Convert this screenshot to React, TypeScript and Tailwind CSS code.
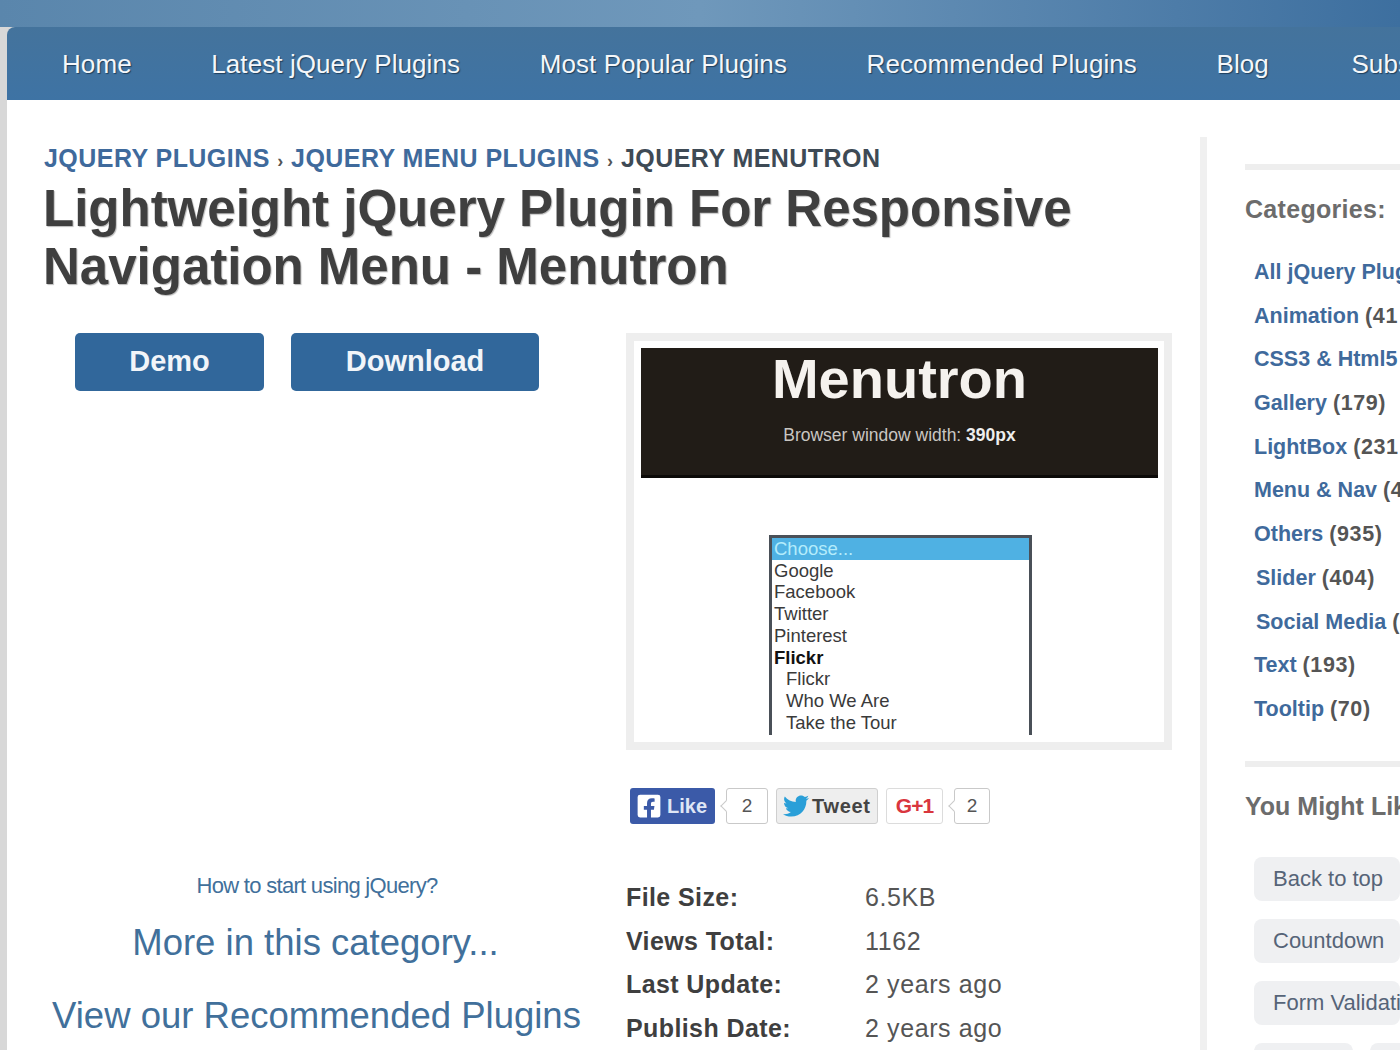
import React from 'react';
import { FaFacebookSquare, FaTwitter } from 'react-icons/fa';

const navLinks = ['Home', 'Latest jQuery Plugins', 'Most Popular Plugins', 'Recommended Plugins', 'Blog', 'Subscribe'];

const categories = [
  { name: 'All jQuery Plugins', count: '', indent: '' },
  { name: 'Animation', count: '(41', indent: '' },
  { name: 'CSS3 & Html5', count: '', indent: '' },
  { name: 'Gallery', count: '(179)', indent: '' },
  { name: 'LightBox', count: '(231', indent: '' },
  { name: 'Menu & Nav', count: '(4', indent: '' },
  { name: 'Others', count: '(935)', indent: '' },
  { name: 'Slider', count: '(404)', indent: 'ml-[2px]' },
  { name: 'Social Media', count: '(', indent: 'ml-[2px]' },
  { name: 'Text', count: '(193)', indent: '' },
  { name: 'Tooltip', count: '(70)', indent: '' },
];

const stats = [
  ['File Size:', '6.5KB'],
  ['Views Total:', '1162'],
  ['Last Update:', '2 years ago'],
  ['Publish Date:', '2 years ago'],
];

const options = ['Google', 'Facebook', 'Twitter', 'Pinterest'];
const subOptions = ['Flickr', 'Who We Are', 'Take the Tour'];

function CountBubble({ value, narrow }: { value: string; narrow?: boolean }) {
  return (
    <div className={`relative ml-[11px] flex h-[36px] items-center justify-center rounded-[3px] border border-[#c9c9c9] bg-white text-[19px] text-[#555] ${narrow ? 'w-[36px]' : 'w-[42px]'}`}>
      <span className="absolute left-[-5px] top-[13px] h-[8px] w-[8px] rotate-45 border-b border-l border-[#c9c9c9] bg-white"></span>
      {value}
    </div>
  );
}

function PreviewShot() {
  return (
    <div className="h-[417px] w-[546px] border-8 border-[#eeeeee] bg-white pl-[7px] pr-[6px] pt-[7px]">
      <div className="flex h-[130px] flex-col items-center border-b-[3px] border-[#0c0a08] bg-[#211c17] text-[#f5f2ee]">
        <div className="mt-[-1px] text-[56px] font-bold leading-[64px]">Menutron</div>
        <div className="mt-[14px] text-[17.5px] leading-[20px] text-[#c9c6c2]">
          Browser window width: <span className="font-bold text-[#eeeeee]">390px</span>
        </div>
      </div>
      <div className="ml-[128px] mt-[57px] h-[200px] w-[263px] overflow-hidden border-x-[3px] border-t-[3px] border-[#4a5058] text-[18.5px] leading-[21.7px] text-[#3a3a3a]">
        <div className="bg-[#4fb1e3] pl-[2px] text-[#b4ecfb]">Choose...</div>
        {options.map((o) => (
          <div key={o} className="pl-[2px]">{o}</div>
        ))}
        <div className="pl-[2px] font-bold text-[#111]">Flickr</div>
        {subOptions.map((o) => (
          <div key={o} className="pl-[14px]">{o}</div>
        ))}
      </div>
    </div>
  );
}

function SocialRow() {
  return (
    <div className="mt-[38px] ml-[4px] flex h-[36px] items-center">
      <div className="flex h-[36px] w-[85px] items-center gap-[5px] rounded-[3px] bg-[#3b5aa8] pl-[6px] text-[20px] font-bold text-[#dfe6f5]">
        <FaFacebookSquare className="h-[26px] w-[26px] text-white" />
        <span>Like</span>
      </div>
      <CountBubble value="2" />
      <div className="ml-[8px] flex h-[36px] w-[102px] items-center gap-[3px] rounded-[3px] border border-[#cfcfcf] bg-[#eeeeee] pl-[6px] text-[20px] font-bold tracking-[0.7px] text-[#444]">
        <FaTwitter className="h-[26px] w-[26px] text-[#2a9fd8]" />
        <span>Tweet</span>
      </div>
      <div className="ml-[8px] flex h-[36px] w-[57px] items-center justify-center rounded-[3px] border border-[#dcdcdc] bg-white text-[21px] font-bold tracking-[-1px] text-[#d9363e]">
        G+1
      </div>
      <CountBubble value="2" narrow />
    </div>
  );
}

export default function App() {
  return (
    <div className="flex h-[1050px] w-[1400px] flex-col overflow-hidden bg-[#d8d8d8] font-['Liberation_Sans',Arial,sans-serif]">
      <div className="h-[27px] shrink-0 bg-gradient-to-r from-[#5a86ac] via-[#6f98bb] to-[#3d6f9f]"></div>
      <nav className="ml-[7px] flex h-[73px] shrink-0 items-center gap-[79.6px] whitespace-nowrap rounded-tl-[8px] bg-gradient-to-b from-[#44739c] to-[#3e73a4] pl-[55px] pt-[1px] text-[26px] tracking-[0.08px] text-[#f4f7fa] [text-shadow:1px_1px_1px_#1f3f5c]">
        {navLinks.map((link) => (
          <a key={link} className="last:ml-[3px]">{link}</a>
        ))}
      </nav>

      <div className="ml-[7px] flex min-h-0 flex-1 bg-white">
        <main className="w-[1193px] shrink-0 pl-[37px] pt-[44px]">
          <div className="whitespace-nowrap text-[25px] font-bold uppercase leading-[29px] tracking-[0.45px] text-[#3f6a9c]">
            jQuery Plugins <span className="text-[18px] text-[#555]">›</span> jQuery Menu Plugins{' '}
            <span className="text-[18px] text-[#555]">›</span> <span className="text-[#3e4a55]">jQuery Menutron</span>
          </div>
          <h1 className="ml-[-1px] mt-[4px] text-[51px] font-bold leading-[58px] text-[#3f3f3f] [text-shadow:1px_1px_1px_#bbb]">
            Lightweight jQuery Plugin For Responsive
            <br />
            Navigation Menu - Menutron
          </h1>

          <div className="mt-[37px] flex">
            <div className="flex w-[582px] shrink-0 flex-col">
              <div className="ml-[31px] flex gap-[27px] text-[29px] font-bold text-[#f2f5f9]">
                <button className="h-[58px] w-[189px] rounded-[5px] bg-[#31679b]">Demo</button>
                <button className="h-[58px] w-[248px] rounded-[5px] bg-[#31679b]">Download</button>
              </div>
              <div className="mt-[482px] w-[546px] text-center text-[#41709b]">
                <div className="text-[22px] leading-[26px] tracking-[-0.7px]">How to start using jQuery?</div>
                <div className="ml-[-3px] mt-[22px] text-[36.5px] leading-[44px]">More in this category...</div>
                <div className="ml-[-1px] mt-[29px] whitespace-nowrap text-[36.5px] leading-[44px]">View our Recommended Plugins</div>
              </div>
            </div>

            <div className="flex flex-col">
              <PreviewShot />
              <SocialRow />
              <div className="mt-[52px]">
                {stats.map(([label, value]) => (
                  <div key={label} className="flex h-[43.7px] items-center text-[25px]">
                    <div className="w-[239px] font-bold tracking-[0.4px] text-[#3f3f3f]">{label}</div>
                    <div className="tracking-[0.6px] text-[#555]">{value}</div>
                  </div>
                ))}
              </div>
            </div>
          </div>
        </main>

        <aside className="mt-[37px] min-w-0 flex-1 overflow-hidden whitespace-nowrap border-l-[7px] border-[#f0f0f0] pl-[38px] pt-[27px]">
          <div className="h-[6px] bg-[#eeeeee]"></div>
          <h3 className="mt-[25px] text-[25px] font-bold leading-[29px] tracking-[0.3px] text-[#6c6c6c]">Categories:</h3>
          <ul className="mt-[27px] pl-[9px] text-[21.5px] font-bold">
            {categories.map((c) => (
              <li key={c.name} className={`h-[43.7px] leading-[43.7px] text-[#3f6a9c] ${c.indent}`}>
                {c.name} {c.count && <span className="tracking-[0.6px] text-[#555]">{c.count}</span>}
              </li>
            ))}
          </ul>
          <div className="mt-[29px] h-[6px] bg-[#eeeeee]"></div>
          <h3 className="mt-[25px] text-[25px] font-bold leading-[29px] text-[#6c6c6c]">You Might Like</h3>
          <div className="mt-[36px] flex flex-col gap-[18px] pl-[9px] text-[22px] text-[#566478]">
            <div className="flex h-[44px] w-[146px] items-center rounded-[8px] bg-[#eff0f2] pl-[19px]">Back to top</div>
            <div className="flex h-[44px] items-center rounded-[8px] bg-[#eff0f2] pl-[19px]">Countdown</div>
            <div className="flex h-[44px] items-center rounded-[8px] bg-[#eff0f2] pl-[19px]">Form Validation</div>
            <div className="flex gap-[17px]">
              <div className="h-[44px] w-[99px] shrink-0 rounded-[8px] bg-[#eff0f2]"></div>
              <div className="h-[44px] w-[60px] shrink-0 rounded-[8px] bg-[#eff0f2]"></div>
            </div>
          </div>
        </aside>
      </div>
    </div>
  );
}
